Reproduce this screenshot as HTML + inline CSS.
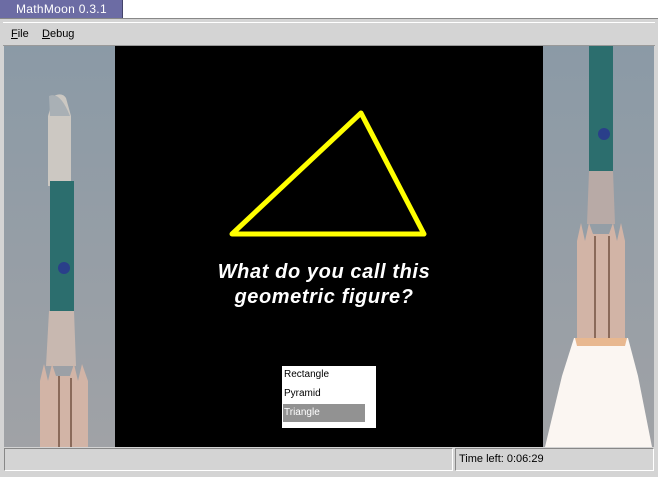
<!DOCTYPE html>
<html><head><style>
body{margin:0;width:658px;height:476px;background:#fff;position:relative;overflow:hidden;font-family:"Liberation Sans",sans-serif}
.tab{position:absolute;left:0;top:0;width:123px;height:18px;background:#6c6ca4;color:#fff;font-size:12px;line-height:18px;padding-left:16px;box-sizing:border-box;letter-spacing:.3px;border-right:1px solid #44446a}
.win{position:absolute;left:0;top:18px;width:658px;height:458px;background:#d4d4d4;border-top:1px solid #888}
.menu{position:absolute;left:3px;top:3px;width:652px;height:22px;border-top:1px solid #fff;border-bottom:1px solid #999;font-size:11px}
.menu span{position:absolute;top:5px}
.menu u{text-decoration:underline}
.main{position:absolute;left:4px;top:27px;width:650px;height:401px;background:#000}
.sb{position:absolute;top:429px;height:23px;border:1px solid #888;border-right-color:#fff;border-bottom-color:#fff;box-sizing:border-box;font-size:11px;line-height:21px;padding-left:3px}
</style></head><body>
<div class="tab">MathMoon 0.3.1</div>
<div class="win">
<div class="menu"><span style="left:8px"><u>F</u>ile</span><span style="left:39px"><u>D</u>ebug</span></div>
<div class="main">
<svg width="650" height="401" style="position:absolute;left:0;top:0">
<defs><linearGradient id="sky" x1="0" y1="0" x2="0" y2="1"><stop offset="0" stop-color="#8b9aa6"/><stop offset="1" stop-color="#a0a2a6"/></linearGradient></defs>
<rect x="0" y="0" width="111" height="401" fill="url(#sky)"/>
<path d="M44 70 L50 50 Q58 46 62 52 L67 70 L67 140 L44 140Z" fill="#ccc8c2"/>
<path d="M45 50 Q56 45 66 70 L46 70Z" fill="#a9b0b5"/>
<rect x="46" y="135" width="24" height="130" fill="#2c6e6e"/>
<circle cx="60" cy="222" r="6" fill="#2a3f8a"/>
<path d="M45 265 L70 265 L72 320 L42 320Z" fill="#c8b8b0"/>
<path d="M36 335 L40 318 L44 335 L48 318 L52 330 L66 330 L70 318 L74 335 L78 318 L84 335 L84 401 L36 401Z" fill="#d2b4a6"/>
<path d="M55 330 L55 401 M67 332 L67 401" stroke="#8a6a5a" stroke-width="2"/>
<rect x="111" y="0" width="428" height="401" fill="#000"/>
<rect x="539" y="0" width="111" height="401" fill="url(#sky)"/>
<rect x="585" y="0" width="24" height="125" fill="#2c6e6e"/>
<circle cx="600" cy="88" r="6" fill="#2a3f8a"/>
<path d="M585 125 L609 125 L611 178 L583 178Z" fill="#b8aaa6"/>
<path d="M573 195 L577 177 L581 195 L585 177 L589 188 L605 188 L609 177 L613 195 L617 177 L621 195 L621 292 L573 292Z" fill="#d2b4a6"/>
<path d="M591 190 L591 292 M605 190 L605 292" stroke="#8a6a5a" stroke-width="2"/>
<path d="M570 292 L624 292 L634 330 L648 401 L541 401 L558 330Z" fill="#fbf6f2"/>
<path d="M571 292 L623 292 L621 300 L573 300Z" fill="#e8b890"/>
<polygon points="228,188 357,67 420,188" fill="none" stroke="#ffff00" stroke-width="5" stroke-linejoin="round"/>
</svg>
<div style="position:absolute;left:106px;width:428px;top:214px;text-align:center;color:#fff;font-weight:bold;font-style:italic;font-size:20px;line-height:25px;letter-spacing:.6px">What do you call this<br>geometric figure?</div>
<div style="position:absolute;left:278px;top:320px;width:94px;height:62px;background:#fff;font-size:10px">
<div style="position:absolute;left:2px;top:3px">Rectangle</div>
<div style="position:absolute;left:2px;top:22px">Pyramid</div>
<div style="position:absolute;left:1px;top:38px;width:82px;height:18px;background:#929292;color:#fff;line-height:18px;padding-left:1px;box-sizing:border-box">Triangle</div>
</div>
</div>
<div class="sb" style="left:4px;width:449px"></div>
<div class="sb" style="left:455px;width:199px">Time left: 0:06:29</div>
</div>
</body></html>
